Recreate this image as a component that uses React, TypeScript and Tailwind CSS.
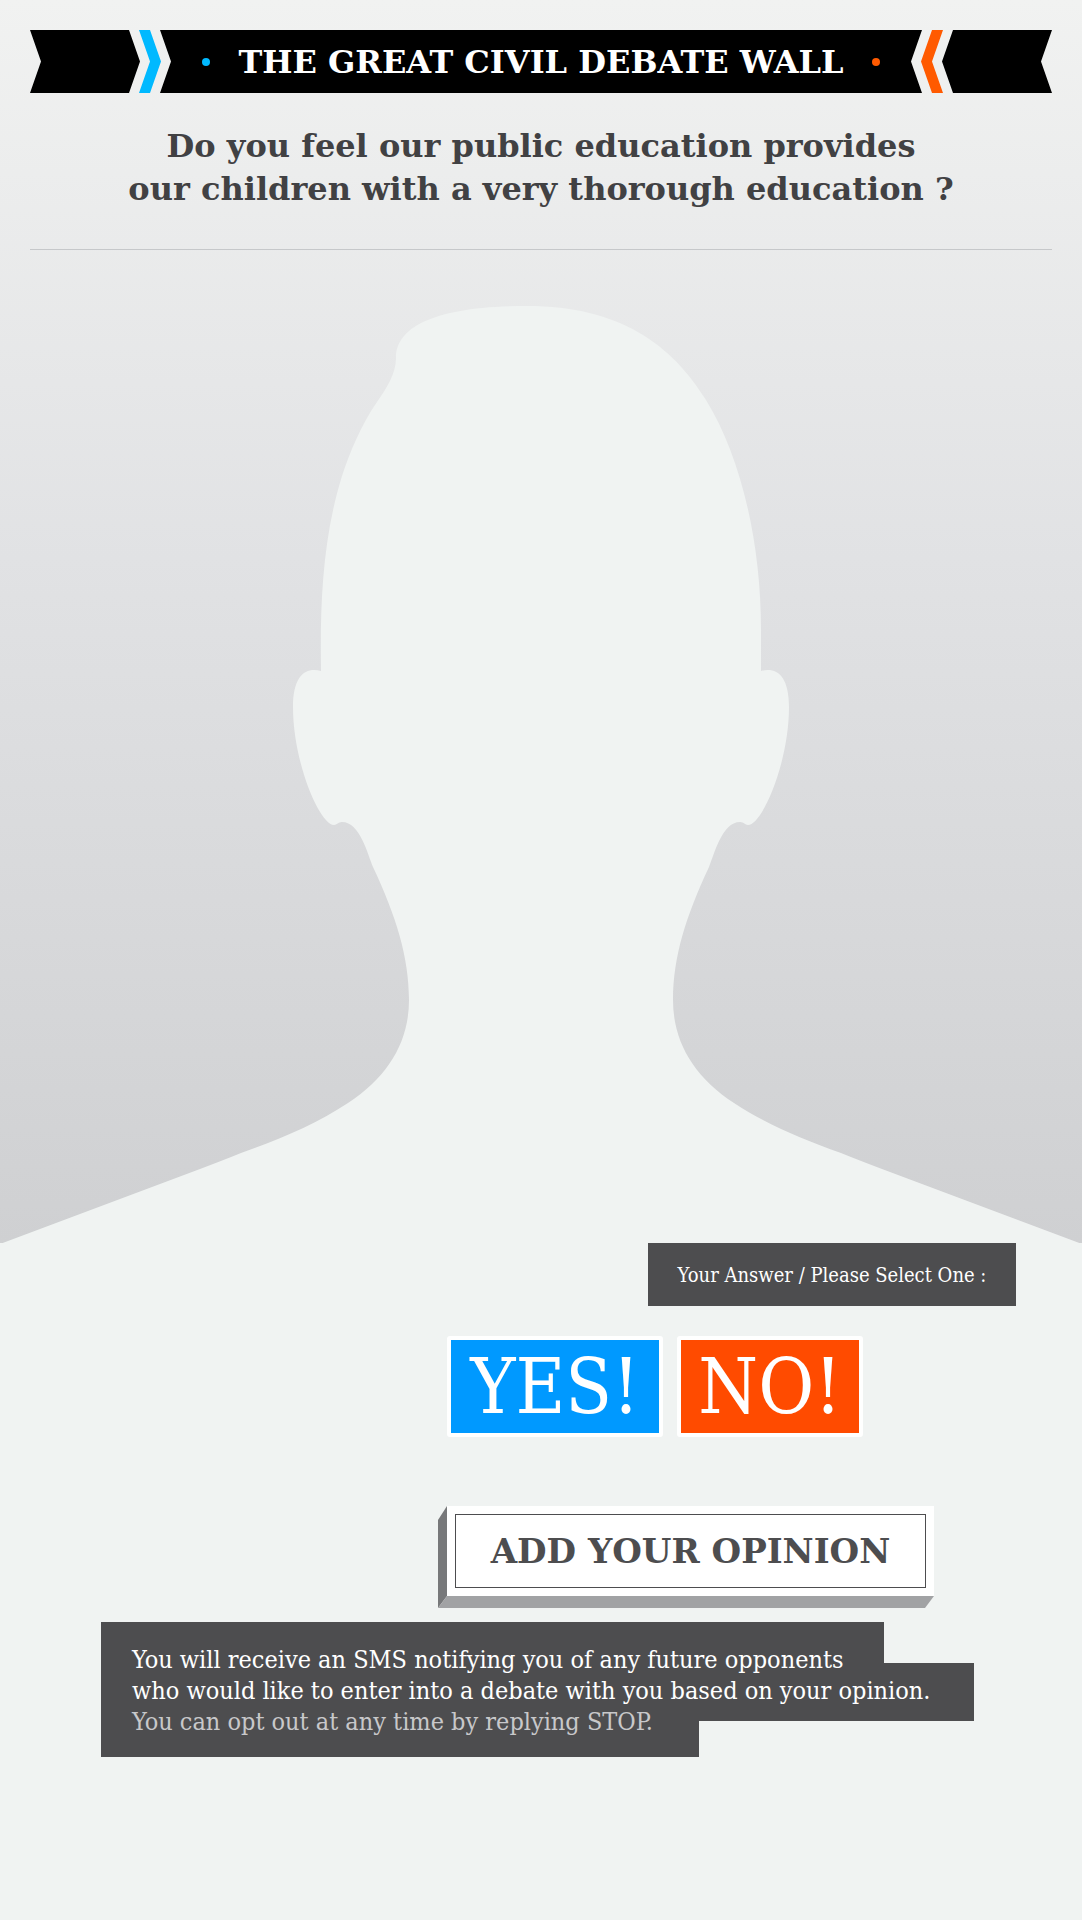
import { useState } from "react";

function Banner() {
  return (
    <div className="flex h-[63px]">
      <div className="w-[110px] bg-black [clip-path:polygon(0_0,99px_0,100%_50%,99px_100%,0_100%,11px_50%)]" />
      <div className="-ml-px w-[22px] bg-[#00b9ff] [clip-path:polygon(0_0,11px_0,100%_50%,11px_100%,0_100%,11px_50%)]" />
      <div className="-mx-px flex flex-1 items-center justify-center gap-7 bg-black [clip-path:polygon(0_0,100%_0,calc(100%-11px)_50%,100%_100%,0_100%,11px_50%)]">
        <span className="size-2 rounded-full bg-[#00b9ff]" />
        <h1 className="font-['DejaVu_Serif',serif] text-[32px] leading-10 font-bold whitespace-nowrap text-white">
          THE GREAT CIVIL DEBATE WALL
        </h1>
        <span className="size-2 rounded-full bg-[#ff5a00]" />
      </div>
      <div className="w-[22px] bg-[#ff5a00] [clip-path:polygon(11px_0,100%_0,11px_50%,100%_100%,11px_100%,0_50%)]" />
      <div className="-ml-px w-[110px] bg-black [clip-path:polygon(11px_0,100%_0,99px_50%,100%_100%,11px_100%,0_50%)]" />
    </div>
  );
}

function Silhouette() {
  return (
    <svg
      viewBox="0 250 1082 993"
      className="block w-full"
      role="img"
      aria-label="Portrait placeholder"
    >
      <path
        fill="#f0f3f2"
        d="M0 1244 L200 1169 C214 1164 228 1158 241 1153 C281 1139 316 1124 348 1103 C388 1077 409 1042 409 1000 C409 957 396 916 373 867 C368 855 360 822 342 822 C338 822 337 825 334 825 C320 825 293 763 293 707 C293 675 306 667 321 671 C320 608 322 540 342 476 C350 452 361 425 377 402 C386 389 396 374 396 358 C396 326 437 306 527 306 C620 306 672 345 706 400 C740 455 761 540 761 630 L761 671 C776 667 789 675 789 707 C789 763 762 825 748 825 C745 825 744 822 740 822 C722 822 714 855 709 867 C686 916 673 957 673 1000 C673 1042 694 1077 734 1103 C766 1124 801 1139 841 1153 C854 1158 868 1164 882 1169 L1082 1244 Z"
      />
    </svg>
  );
}

export default function App() {
  const [answer, setAnswer] = useState<"yes" | "no" | null>(null);

  return (
    <div className="min-h-screen bg-[#f0f3f2] font-['DejaVu_Serif_Condensed','DejaVu_Serif',serif] text-[#4d4d4f]">
      <div className="bg-linear-to-b from-[#f1f2f1] via-[#e1e2e4] via-45% to-[#cfd0d2]">
        <header className="px-[30px] pt-[30px]">
          <Banner />
          <p className="border-b border-[#c6c8ca] pt-8 pb-[38px] text-center font-['DejaVu_Serif',serif] text-[32px] leading-[43px] font-bold text-[#414143]">
            Do you feel our public education provides
            <br />
            our children with a very thorough education ?
          </p>
        </header>
        <Silhouette />
      </div>

      <main className="flex flex-col items-start pb-[163px]">
        <p
          id="answer-label"
          className="mr-[66px] flex h-[63px] w-[368px] items-center justify-center self-end bg-[#4d4d4f] text-[20px] text-white"
        >
          Your Answer / Please Select One :
        </p>

        <div
          role="group"
          aria-labelledby="answer-label"
          className="mt-[30px] ml-[447px] flex gap-3.5 text-[76px] leading-none text-white"
        >
          <button
            type="button"
            aria-pressed={answer === "yes"}
            onClick={() => setAnswer("yes")}
            className="h-[101px] w-[216px] rounded-[3px] border-4 border-white bg-[#0099ff]"
          >
            YES!
          </button>
          <button
            type="button"
            aria-pressed={answer === "no"}
            onClick={() => setAnswer("no")}
            className="h-[101px] w-[186px] rounded-[3px] border-4 border-white bg-[#ff4b00]"
          >
            NO!
          </button>
        </div>

        <button
          type="button"
          className="relative mt-[69px] ml-[438px] pb-3 pl-[9px] before:absolute before:inset-y-0 before:left-0 before:w-[9px] before:bg-[#77787a] before:[clip-path:polygon(100%_0,0_14px,0_100%,100%_calc(100%-12px))] after:absolute after:inset-x-0 after:bottom-0 after:h-3 after:bg-[#a1a2a4] after:[clip-path:polygon(9px_0,100%_0,calc(100%-9px)_100%,0_100%)]"
        >
          <span className="block bg-white p-2">
            <span className="flex h-[74px] w-[471px] items-center justify-center border border-[#4d4d4f] font-['DejaVu_Serif',serif] text-[34px] font-bold">
              ADD YOUR OPINION
            </span>
          </span>
        </button>

        <p className="mt-3.5 ml-[101px] w-[873px] bg-[#4d4d4f] px-[31px] pt-[22px] pb-5 text-[25px] leading-[31px] whitespace-nowrap text-white [clip-path:polygon(0_0,783px_0,783px_41px,100%_41px,100%_99px,598px_99px,598px_100%,0_100%)]">
          You will receive an SMS notifying you of any future opponents
          <br />
          who would like to enter into a debate with you based on your opinion.
          <br />
          <span className="text-[#c8c8ca]">
            You can opt out at any time by replying STOP.
          </span>
        </p>
      </main>
    </div>
  );
}
